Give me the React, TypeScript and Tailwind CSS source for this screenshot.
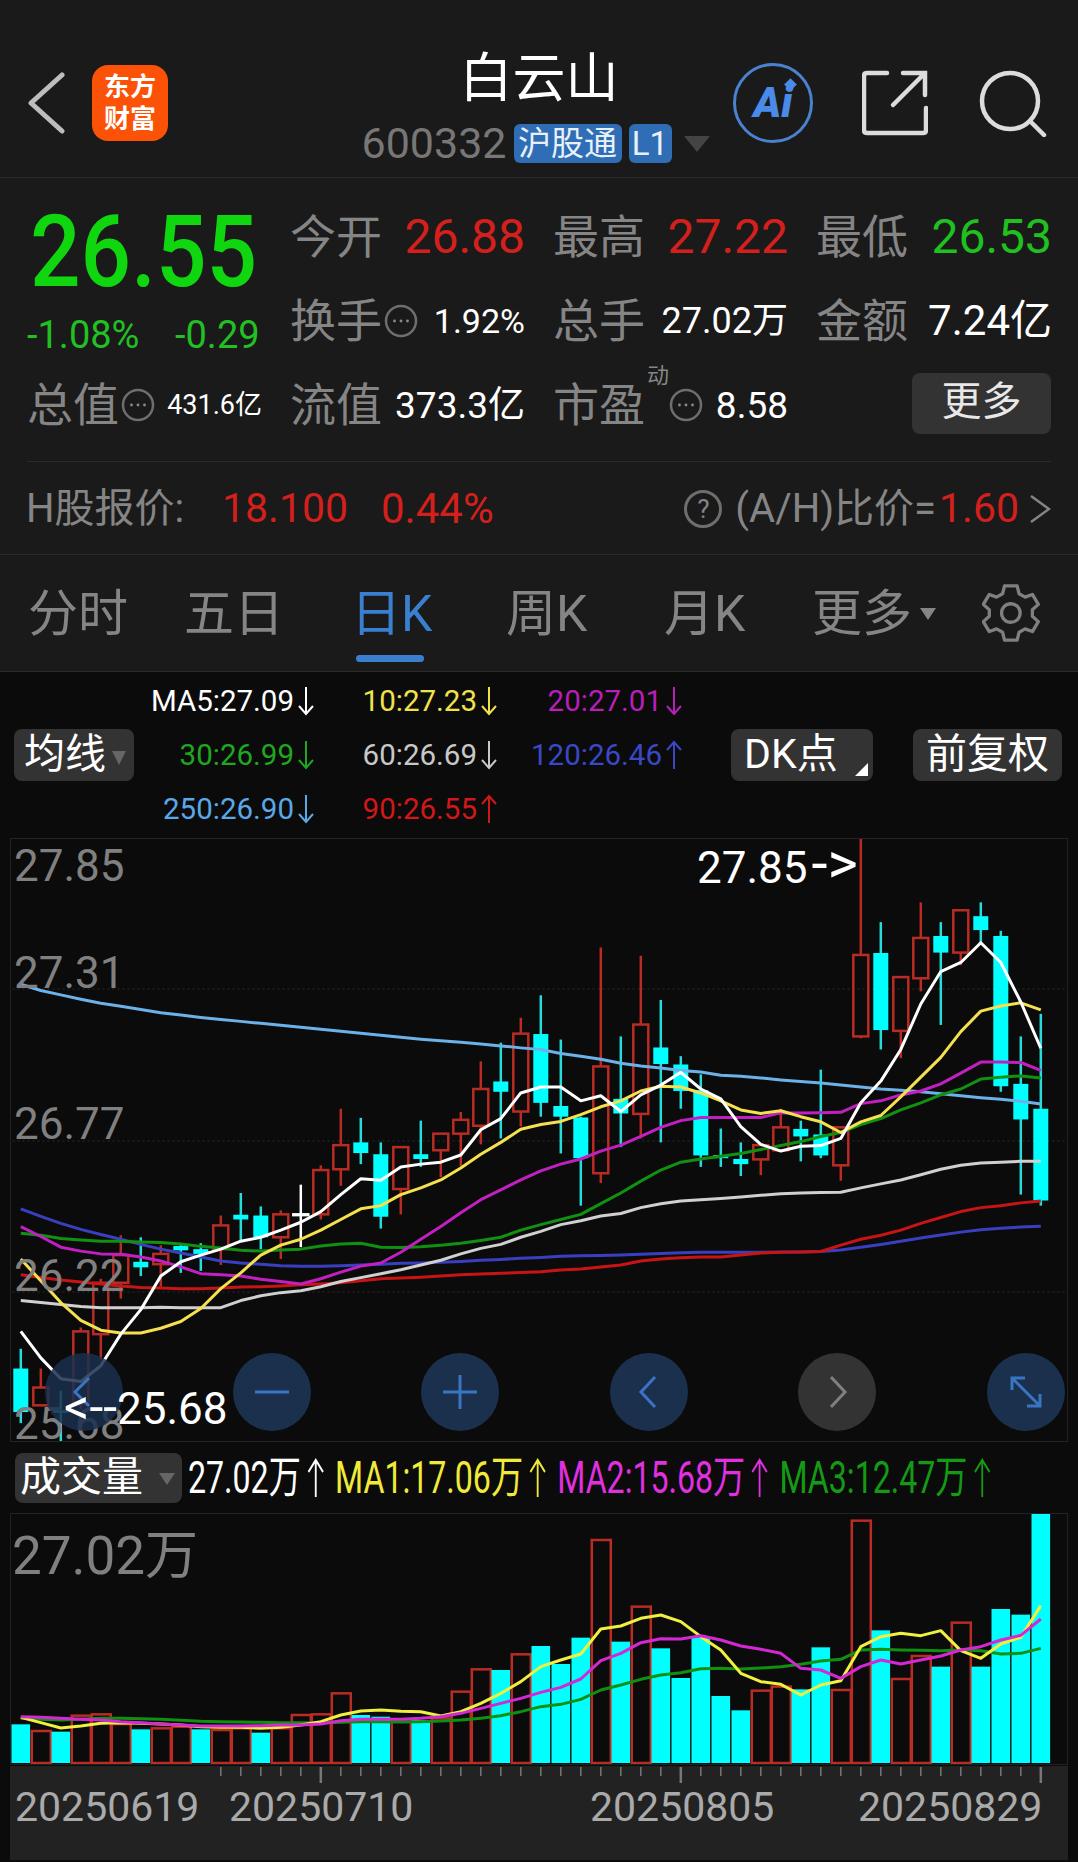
import React from 'react';

// candle: kind (c = cyan, r = red, w = white doji), high, top, bottom, low (y already in page px)
const cy = (z: number) => 830 + z / 2.529;
const vy = (z: number) => 1440 + z / 3;
const cx = (i: number) => 19.3 + 20 * i;

const candles: [string, number, number, number, number][] = [
  ['c', 1312, 1362, 1472, 1500], ['r', 1362, 1410, 1455, 1455], ['c', 1418, 1468, 1474, 1550], ['r', 1258, 1268, 1450, 1465],
  ['r', 1135, 1145, 1275, 1340], ['r', 1025, 1075, 1145, 1185], ['c', 1030, 1092, 1106, 1128], ['r', 1050, 1072, 1098, 1155],
  ['c', 1045, 1052, 1063, 1120], ['c', 1045, 1060, 1072, 1115], ['r', 975, 1000, 1060, 1100], ['c', 918, 973, 985, 1040],
  ['c', 952, 975, 1030, 1060], ['r', 962, 972, 1030, 1085], ['w', 897, 972, 974, 1055], ['r', 848, 860, 972, 985],
  ['r', 705, 797, 858, 900], ['c', 728, 790, 817, 845], ['c', 790, 820, 978, 1008], ['r', 800, 802, 908, 972],
  ['c', 735, 820, 832, 852], ['r', 768, 768, 810, 878], ['r', 713, 733, 768, 850], ['r', 585, 655, 748, 795],
  ['c', 538, 636, 662, 780], ['r', 475, 515, 712, 750], ['c', 418, 516, 690, 725], ['c', 530, 698, 725, 818],
  ['c', 725, 727, 830, 950], ['r', 297, 598, 868, 893], ['c', 522, 680, 717, 802], ['r', 318, 492, 718, 780],
  ['c', 430, 550, 592, 790], ['c', 572, 593, 660, 705], ['c', 618, 658, 823, 852], ['c', 755, 822, 830, 852],
  ['c', 790, 832, 845, 875], ['r', 795, 797, 833, 873], ['r', 705, 752, 810, 810], ['c', 735, 756, 775, 838],
  ['c', 606, 770, 823, 830], ['r', 752, 752, 848, 887], ['r', 22, 316, 522, 527], ['c', 233, 311, 506, 555],
  ['r', 372, 372, 508, 577], ['r', 183, 273, 375, 408], ['c', 233, 268, 310, 493], ['r', 203, 203, 310, 342],
  ['c', 183, 218, 253, 290], ['c', 255, 268, 648, 662], ['c', 522, 642, 732, 922], ['c', 465, 705, 937, 950],
];

const priceLines: { color: string; pts: number[] }[] = [
  { color: '#6cb2e8', pts: [390, 406, 417, 428, 438, 446, 454, 462, 468, 474, 479, 484, 489, 494, 499, 504, 509, 514, 519, 524, 529, 533, 537, 541, 546, 551, 555, 565, 572, 580, 590, 597, 602, 608, 612, 620, 623, 627, 632, 636, 640, 645, 650, 655, 658, 662, 667, 672, 677, 681, 686, 693] },
  { color: '#3a3fc0', pts: [958, 977, 995, 1010, 1023, 1035, 1048, 1060, 1070, 1080, 1090, 1095, 1098, 1102, 1103, 1103, 1102, 1100, 1098, 1096, 1095, 1093, 1091, 1088, 1086, 1083, 1081, 1078, 1077, 1076, 1075, 1073, 1071, 1069, 1068, 1068, 1068, 1068, 1067, 1067, 1066, 1062, 1055, 1048, 1040, 1032, 1024, 1017, 1011, 1007, 1004, 1002] },
  { color: '#c81414', pts: [1125, 1132, 1138, 1143, 1148, 1153, 1157, 1158, 1160, 1160, 1158, 1156, 1155, 1153, 1150, 1148, 1145, 1140, 1135, 1133, 1131, 1128, 1125, 1123, 1121, 1119, 1117, 1113, 1110, 1105, 1100, 1090, 1085, 1082, 1080, 1080, 1075, 1070, 1068, 1067, 1066, 1050, 1035, 1025, 1012, 995, 980, 965, 955, 950, 943, 938] },
  { color: '#d0d0d0', pts: [1190, 1195, 1200, 1205, 1208, 1208, 1208, 1207, 1208, 1208, 1208, 1190, 1178, 1170, 1165, 1155, 1142, 1132, 1122, 1112, 1100, 1088, 1072, 1058, 1048, 1030, 1015, 998, 988, 976, 970, 955, 945, 938, 935, 932, 928, 924, 920, 918, 917, 916, 905, 895, 885, 872, 858, 848, 842, 840, 838, 838] },
  { color: '#129012', pts: [1020, 1025, 1033, 1037, 1040, 1040, 1042, 1043, 1047, 1053, 1057, 1063, 1065, 1062, 1060, 1052, 1047, 1045, 1055, 1056, 1054, 1050, 1045, 1038, 1030, 1012, 998, 985, 972, 945, 918, 888, 860, 840, 832, 825, 818, 808, 798, 788, 775, 765, 745, 730, 708, 690, 670, 655, 630, 625, 622, 627] },
  { color: '#c020c0', pts: [1003, 1028, 1055, 1065, 1072, 1073, 1080, 1090, 1105, 1122, 1125, 1128, 1136, 1142, 1148, 1135, 1118, 1103, 1095, 1068, 1035, 1003, 968, 935, 910, 885, 862, 845, 832, 812, 797, 775, 752, 735, 727, 727, 727, 727, 715, 716, 715, 714, 692, 685, 670, 660, 642, 615, 587, 587, 588, 608] },
  { color: '#f5e050', pts: [1085, 1140, 1195, 1240, 1265, 1272, 1272, 1260, 1243, 1210, 1160, 1120, 1075, 1050, 1035, 1012, 985, 958, 950, 922, 905, 885, 855, 820, 790, 757, 745, 737, 720, 700, 685, 660, 648, 650, 665, 685, 708, 717, 710, 725, 738, 765, 738, 722, 675, 625, 575, 510, 458, 445, 437, 455] },
  { color: '#ffffff', pts: [1268, 1335, 1388, 1395, 1355, 1275, 1213, 1128, 1092, 1075, 1060, 1040, 1030, 1012, 992, 965, 922, 882, 886, 852, 845, 840, 822, 758, 730, 665, 650, 650, 685, 672, 712, 670, 645, 613, 655, 680, 750, 795, 812, 800, 798, 780, 690, 635, 555, 440, 358, 335, 285, 335, 435, 552] },
];

// volume bars: kind, top
const bars: [string, number][] = [
  ['c', 853], ['r', 873], ['c', 875], ['r', 827], ['r', 823], ['r', 852], ['c', 868], ['r', 865], ['r', 860], ['c', 868], ['r', 870], ['r', 865], ['c', 878],
  ['r', 865], ['r', 825], ['r', 823], ['r', 760], ['c', 825], ['c', 830], ['r', 845], ['c', 840], ['r', 835], ['r', 755], ['r', 688], ['c', 690], ['r', 643],
  ['c', 618], ['c', 672], ['c', 593], ['r', 300], ['c', 605], ['r', 500], ['c', 625], ['c', 714], ['c', 592], ['c', 768], ['c', 811], ['r', 752], ['r', 740],
  ['c', 748], ['c', 622], ['r', 750], ['r', 242], ['c', 571], ['r', 717], ['r', 648], ['c', 680], ['r', 548], ['c', 680], ['c', 507], ['c', 524], ['c', 222],
];

const volLines: { color: string; pts: number[] }[] = [
  { color: '#109010', pts: [835, 838, 840, 838, 835, 835, 836, 838, 841, 844, 845, 846, 847, 848, 848, 848, 847, 845, 845, 846, 845, 843, 840, 835, 827, 815, 800, 793, 778, 750, 735, 718, 705, 698, 686, 685, 687, 684, 680, 673, 663, 658, 630, 628, 630, 631, 632, 630, 632, 642, 640, 625] },
  { color: '#f0f040', pts: [832, 848, 864, 858, 850, 848, 850, 852, 855, 860, 862, 862, 865, 862, 855, 845, 825, 813, 810, 814, 815, 828, 815, 790, 760, 725, 680, 660, 642, 567, 558, 535, 525, 545, 590, 630, 700, 725, 733, 765, 735, 722, 620, 590, 580, 587, 572, 632, 655, 612, 592, 497] },
  { color: '#d428d4', pts: [830, 832, 835, 838, 840, 845, 848, 852, 855, 858, 858, 858, 857, 855, 855, 852, 842, 838, 838, 838, 835, 830, 820, 805, 790, 775, 757, 742, 717, 662, 640, 608, 596, 597, 587, 600, 618, 628, 640, 685, 690, 715, 680, 660, 672, 660, 648, 630, 620, 600, 586, 537] },
];

const Dots = ({ className = '' }: { className?: string }) => (
  <svg viewBox="0 0 34 34" className={`w-[34px] h-[34px] shrink-0 ${className}`} fill="none">
    <circle cx="17" cy="17" r="15" stroke="#6e6e6e" strokeWidth="2.5" />
    <circle cx="10.5" cy="17" r="1.4" fill="#8a8a8a" />
    <circle cx="17" cy="17" r="1.4" fill="#8a8a8a" />
    <circle cx="23.5" cy="17" r="1.4" fill="#8a8a8a" />
  </svg>
);

const Arrow = ({ up = false }: { up?: boolean }) => (
  <svg viewBox="0 0 18 30" className="w-[18px] h-[30px] ml-[3px] shrink-0" fill="none" stroke="currentColor" strokeWidth="2">
    {up ? <path d="M9 29V2M2 10l7-8 7 8" /> : <path d="M9 1v27M2 20l7 8 7-8" />}
  </svg>
);

const MA = ({ text, dir, color }: { text: string; dir: 'u' | 'd'; color: string }) => (
  <div className={`flex items-center justify-end text-[29.5px] leading-[54px] ${color}`}>
    {text}
    <Arrow up={dir === 'u'} />
  </div>
);

const Cell = ({ label, children, icon }: { label: string; children: React.ReactNode; icon?: boolean }) => (
  <div className="flex items-center justify-between pr-[28px]">
    <span className="flex items-center text-[46px] leading-none text-[#858585]">
      {label}
      {icon && <Dots className="ml-[2px]" />}
    </span>
    {children}
  </div>
);

const VolStat = ({ text, color }: { text: string; color: string }) => (
  <div className={`flex items-center text-[44px] leading-none ${color}`}>
    {text}
    <svg viewBox="0 0 24 40" className="w-[24px] h-[40px] ml-[8px] shrink-0" fill="none" stroke="currentColor" strokeWidth="2.5">
      <path d="M12 39V2M2 14L12 2l10 12" />
    </svg>
  </div>
);

const RoundBtn = ({ className, children }: { className: string; children: React.ReactNode }) => (
  <div className={`absolute top-[514px] w-[78px] h-[78px] rounded-full flex items-center justify-center ${className}`}>
    <svg viewBox="0 0 40 40" className="w-[40px] h-[40px]" fill="none" stroke="currentColor" strokeWidth="3">
      {children}
    </svg>
  </div>
);

export default function App() {
  return (
    <div className="w-[1078px] h-[1862px] overflow-hidden bg-[#0b0b0b] font-[Roboto,'Noto_Sans_CJK_SC',sans-serif]">
      {/* header */}
      <div className="h-[178px] bg-[#1a1a1a] border-b border-[#2b2b2b] grid grid-cols-[359px_360px_1fr]">
        <div className="flex items-center pl-[27px] pt-[28px]">
          <svg viewBox="0 0 38 64" className="w-[38px] h-[64px]" fill="none" stroke="#bdbdbd" strokeWidth="5" strokeLinecap="round" strokeLinejoin="round">
            <path d="M35 4 4 32l31 28" />
          </svg>
          <div className="ml-[27px] w-[76px] h-[76px] rounded-[16px] bg-[#fb5208] text-white font-bold text-[26px] leading-[32px] text-center flex items-center justify-center">
            东方<br />财富
          </div>
        </div>
        <div className="flex flex-col items-center pt-[49px]">
          <div className="text-[53px] leading-[60px] text-white">白云山</div>
          <div className="mt-[13px] flex items-center text-[43px] leading-none text-[#777]">
            <span className="ml-[-7px]">600332</span>
            <span className="ml-[7px] h-[39px] w-[108px] rounded-[6px] bg-[#2f6db5] text-[#e8f0fa] text-[33px] leading-[39px] text-center">沪股通</span>
            <span className="ml-[7px] h-[39px] w-[43px] rounded-[6px] bg-[#2f6db5] text-[#e8f0fa] text-[33px] leading-[39px] text-center">L1</span>
            <span className="ml-[12px] w-0 h-0 border-x-[13px] border-x-transparent border-t-[16px] border-t-[#444]" />
          </div>
        </div>
        <div className="flex items-center pl-[14px] pt-[28px]">
          <div className="relative w-[80px] h-[80px] rounded-full border-[3.5px] border-[#4a82d0] flex items-center justify-center text-[#4a8ae8] text-[42px] leading-none font-black italic">
            Ai
            <span className="absolute top-[14px] left-[50px] w-[9px] h-[9px] rotate-45 bg-[#4a8ae8]" />
          </div>
          <svg viewBox="0 0 66 66" className="ml-[49px] w-[66px] h-[66px]" fill="none" stroke="#dcdcdc" strokeWidth="4.5" strokeLinecap="round">
            <path d="M25 3H5Q2 3 2 6V60Q2 63 5 63H61Q64 63 64 60V38" />
            <path d="M31 35 62 4M41 3H63V25" />
          </svg>
          <svg viewBox="0 0 68 68" className="ml-[51px] w-[68px] h-[68px]" fill="none" stroke="#dcdcdc" strokeWidth="4.5" strokeLinecap="round">
            <circle cx="31" cy="32" r="28" />
            <path d="M52 53 65 66" />
          </svg>
        </div>
      </div>

      {/* quote */}
      <div className="h-[377px] bg-[#1a1a1a] border-b border-[#2b2b2b]">
        <div className="pt-[17px] pl-[27px] grid grid-cols-[263px_263px_263px_235px] auto-rows-[84px]">
          <div className="row-span-2">
            <div className="text-[89px] leading-[100px] font-medium mt-[7px] ml-[3px] text-[#0fd60f] scale-y-[1.12] origin-center">26.55</div>
            <div className="mt-[14px] flex text-[38px] leading-[38px] text-[#22c022]">
              <span className="w-[148px]">-1.08%</span>
              <span>-0.29</span>
            </div>
          </div>
          <Cell label="今开"><span className="text-[48px] leading-none text-[#d4201c]">26.88</span></Cell>
          <Cell label="最高"><span className="text-[48px] leading-none text-[#d4201c]">27.22</span></Cell>
          <Cell label="最低"><span className="text-[48px] leading-none text-[#1fc01f] mr-[-29px]">26.53</span></Cell>
          <Cell label="换手" icon><span className="text-[34px] leading-none text-white">1.92%</span></Cell>
          <Cell label="总手"><span className="text-[36px] leading-none text-white">27.02万</span></Cell>
          <Cell label="金额"><span className="text-[42px] leading-none text-white mr-[-29px]">7.24亿</span></Cell>
          <div className="flex items-center pr-[28px]">
            <span className="text-[46px] leading-none text-[#858585]">总值</span>
            <Dots className="ml-[2px]" />
            <span className="ml-auto text-[27px] leading-none text-white">431.6亿</span>
          </div>
          <Cell label="流值"><span className="text-[37px] leading-none text-white">373.3亿</span></Cell>
          <div className="flex items-center pr-[28px]">
            <span className="text-[46px] leading-none text-[#858585]">市盈</span>
            <span className="self-start mt-[2px] ml-[2px] text-[22px] leading-none text-[#858585]">动</span>
            <Dots />
            <span className="ml-auto text-[37px] leading-none text-white">8.58</span>
          </div>
          <div className="flex items-center justify-end">
            <div className="w-[139px] h-[61px] mt-[-3px] rounded-[8px] bg-[#333333] text-[#e8e8e8] text-[40px] leading-[58px] text-center">更多</div>
          </div>
        </div>
        <div className="mt-[14px] mx-[27px] border-t border-[#2b2b2b]" />
        <div className="h-[93px] ml-[26px] mr-[27px] flex items-center text-[40px] leading-none text-[#858585]">
          <span className="w-[196px]">H股报价:</span>
          <span className="w-[159px] text-[41px] text-[#d4201c]">18.100</span>
          <span className="text-[42px] text-[#d4201c]">0.44%</span>
          <span className="ml-auto w-[38px] h-[38px] rounded-full border-[3px] border-[#6e6e6e] text-[26px] leading-[32px] text-center text-[#858585]">?</span>
          <span className="ml-[13px]">(A/H)比价=</span>
          <span className="ml-[3px] text-[41px] text-[#d4201c]">1.60</span>
          <svg viewBox="0 0 22 32" className="ml-[10px] w-[22px] h-[32px]" fill="none" stroke="#858585" strokeWidth="2.5">
            <path d="M2 3 20 16 2 29" />
          </svg>
        </div>
      </div>

      {/* period tabs */}
      <div className="h-[117px] bg-[#1a1a1a] border-b border-[#2b2b2b] pl-[28px] grid grid-cols-[156px_167px_155px_158px_148px_167px_1fr] text-[50px] leading-[60px] text-[#858585]">
        <div className="pt-[29px]">分时</div>
        <div className="pt-[29px]">五日</div>
        <div className="pt-[29px] text-[#3a7fd0]">
          日K
          <div className="mt-[11px] ml-[5px] w-[68px] h-[7px] rounded-full bg-[#3a7fd0]" />
        </div>
        <div className="pt-[29px]">周K</div>
        <div className="pt-[29px]">月K</div>
        <div className="pt-[29px] flex items-start">
          更多
          <span className="mt-[24px] ml-[8px] w-0 h-0 border-x-[8px] border-x-transparent border-t-[12px] border-t-[#858585]" />
        </div>
        <div className="pt-[29px] pl-[3px]">
          <svg viewBox="60 44 175 172" className="w-[58px] h-[58px]" fill="none" stroke="#808080" strokeWidth="10" strokeLinejoin="round">
            <path d="M128 48H166L172 72 190 82 212 74 230 104 212 120V140L230 156 212 186 190 178 172 188 166 212H128L122 188 104 178 82 186 64 156 82 140V120L64 104 82 74 104 82 122 72Z" />
            <circle cx="147" cy="130" r="28" />
          </svg>
        </div>
      </div>

      {/* MA rows */}
      <div className="h-[166px] pl-[14px] flex items-center">
        <div className="relative w-[120px] h-[52px] rounded-[8px] bg-[#333333] text-white text-[41px] leading-[50px] pl-[10px] shrink-0">
          均线
          <span className="absolute right-[8px] top-[22px] w-0 h-0 border-x-[7px] border-x-transparent border-t-[14px] border-t-[#666]" />
        </div>
        <div className="grid grid-cols-[181px_183px_185px] shrink-0">
          <MA text="MA5:27.09" dir="d" color="text-white" />
          <MA text="10:27.23" dir="d" color="text-[#f2e24a]" />
          <MA text="20:27.01" dir="d" color="text-[#b81fb8]" />
          <MA text="30:26.99" dir="d" color="text-[#1fa81f]" />
          <MA text="60:26.69" dir="d" color="text-[#c8c8c8]" />
          <MA text="120:26.46" dir="u" color="text-[#3a48c8]" />
          <MA text="250:26.90" dir="d" color="text-[#5aa8e8]" />
          <MA text="90:26.55" dir="u" color="text-[#d01818]" />
        </div>
        <div className="relative ml-[48px] w-[142px] h-[52px] rounded-[8px] bg-[#333333] text-white text-[41px] leading-[50px] pl-[13px] shrink-0">
          DK点
          <span className="absolute right-[5px] bottom-[5px] w-0 h-0 border-l-[13px] border-l-transparent border-b-[13px] border-b-white" />
        </div>
        <div className="ml-[40px] w-[149px] h-[52px] rounded-[8px] bg-[#333333] text-white text-[41px] leading-[50px] text-center shrink-0">前复权</div>
      </div>

      {/* price chart */}
      <div className="relative mx-[10px] h-[604px] border border-[#222]">
        <svg viewBox="11 839 1053 602" className="block w-full h-full">
          {[989, 1141, 1292].map((y) => (
            <line key={y} x1="11" x2="1064" y1={y} y2={y} stroke="#2c2c2c" strokeDasharray="2 3" />
          ))}
          {candles.map(([k, hi, top, bot, lo], i) => {
            const x = cx(i);
            if (k === 'c') {
              return (
                <g key={i} fill="#00ffff" stroke="none">
                  <rect x={x - 1.25} y={cy(hi)} width="2.5" height={cy(lo) - cy(hi)} fill="#25dcdc" />
                  <rect x={x - 7.5} y={cy(top)} width="15" height={cy(bot) - cy(top)} />
                </g>
              );
            }
            const col = k === 'w' ? '#ffffff' : '#b82c24';
            return (
              <g key={i} stroke={col} strokeWidth="2.5" fill="none">
                <line x1={x} x2={x} y1={cy(hi)} y2={cy(top)} />
                <line x1={x} x2={x} y1={cy(bot)} y2={cy(lo)} />
                <rect x={x - 7.5} y={cy(top)} width="15" height={cy(bot) - cy(top)} />
              </g>
            );
          })}
          {priceLines.map((l) => (
            <polyline key={l.color} points={l.pts.map((z, i) => `${cx(i)},${cy(z)}`).join(' ')} fill="none" stroke={l.color} strokeWidth="3" strokeLinejoin="round" />
          ))}
        </svg>
        <span className="absolute left-[3px] top-[5px] text-[44px] leading-none text-[#808080]">27.85</span>
        <span className="absolute left-[3px] top-[112px] text-[44px] leading-none text-[#808080]">27.31</span>
        <span className="absolute left-[3px] top-[263px] text-[44px] leading-none text-[#808080]">26.77</span>
        <span className="absolute left-[3px] top-[415px] text-[44px] leading-none text-[#808080]">26.22</span>
        <span className="absolute left-[3px] top-[563px] text-[44px] leading-none text-[#808080]">25.68</span>
        <span className="absolute left-[686px] top-[3px] text-[44px] leading-[42px] text-white whitespace-nowrap">27.85<span className="ml-[4px] text-[58px] leading-[42px]">-&gt;</span></span>

        <RoundBtn className="left-[34px] bg-[#1b304d]/85 text-[#3a75c4]"><path d="M25 6 11 20l14 14" /></RoundBtn>
        <RoundBtn className="left-[222px] bg-[#1b304d] text-[#3a75c4]"><path d="M3 20h34" /></RoundBtn>
        <RoundBtn className="left-[410px] bg-[#1b304d] text-[#3a75c4]"><path d="M3 20h34M20 3v34" /></RoundBtn>
        <RoundBtn className="left-[599px] bg-[#1b304d] text-[#3a75c4]"><path d="M26 5 12 20l14 15" /></RoundBtn>
        <RoundBtn className="left-[787px] bg-[#333333] text-[#808080]"><path d="M14 5l14 15-14 15" /></RoundBtn>
        <RoundBtn className="left-[976px] bg-[#1b304d] text-[#3a75c4]"><path d="M6 6l28 28M6 18V6h13M34 22v12H21" /></RoundBtn>

        <span className="absolute left-[53px] top-[547px] text-[44px] leading-[42px] text-white whitespace-nowrap"><span className="text-[50px] leading-[42px]">&lt;--</span>25.68</span>
      </div>

      {/* volume header */}
      <div className="h-[71px] pl-[15px] flex items-center">
        <div className="relative shrink-0 w-[167px] h-[50px] rounded-[8px] bg-[#333333] text-white text-[41px] leading-[48px] pl-[5px]">
          成交量
          <span className="absolute right-[7px] top-[20px] w-0 h-0 border-x-[8px] border-x-transparent border-t-[12px] border-t-[#666]" />
        </div>
        <div className="ml-[6px] shrink-0 origin-left scale-x-[0.73] flex gap-[15px] whitespace-nowrap">
          <VolStat text="27.02万" color="text-white" />
          <VolStat text="MA1:17.06万" color="text-[#f2ea3a]" />
          <VolStat text="MA2:15.68万" color="text-[#e030e0]" />
          <VolStat text="MA3:12.47万" color="text-[#159a15]" />
        </div>
      </div>

      {/* volume chart */}
      <div className="relative mx-[10px] h-[252px] border border-[#222]">
        <svg viewBox="11 1514 1053 250" className="block w-full h-full">
          {bars.map(([k, top], i) => {
            const x = cx(i);
            const y = vy(top);
            return k === 'c' ? (
              <rect key={i} x={x - 9.3} y={y} width="18.6" height={1763 - y} fill="#00ffff" />
            ) : (
              <rect key={i} x={x - 9} y={y} width="19" height={1763 - y} fill="none" stroke="#b82c24" strokeWidth="2.5" />
            );
          })}
          {volLines.map((l) => (
            <polyline key={l.color} points={l.pts.map((z, i) => `${cx(i)},${vy(z)}`).join(' ')} fill="none" stroke={l.color} strokeWidth="3" strokeLinejoin="round" />
          ))}
        </svg>
        <span className="absolute left-[1px] top-[16px] text-[53px] leading-none text-[#808080]">27.02万</span>
      </div>

      {/* date axis */}
      <div className="relative mx-[10px] mt-[1px] h-[94px] bg-[#222222]">
        <svg viewBox="10 1766 1055 20" className="block w-full h-[20px]">
          {Array.from({ length: 42 }, (_, n) => n + 10).map((i) => {
            const major = i === 15 || i === 33 || i === 51;
            return <line key={i} x1={cx(i)} x2={cx(i)} y1="1767" y2={major ? 1783 : 1776} stroke="#777" strokeWidth={major ? 2.5 : 1.5} />;
          })}
        </svg>
        <span className="absolute left-[5px] top-[17px] text-[41px] leading-[48px] text-[#aaaaaa]">20250619</span>
        <span className="absolute left-[219px] top-[17px] text-[41px] leading-[48px] text-[#aaaaaa]">20250710</span>
        <span className="absolute left-[580px] top-[17px] text-[41px] leading-[48px] text-[#aaaaaa]">20250805</span>
        <span className="absolute left-[848px] top-[17px] text-[41px] leading-[48px] text-[#aaaaaa]">20250829</span>
      </div>
    </div>
  );
}
